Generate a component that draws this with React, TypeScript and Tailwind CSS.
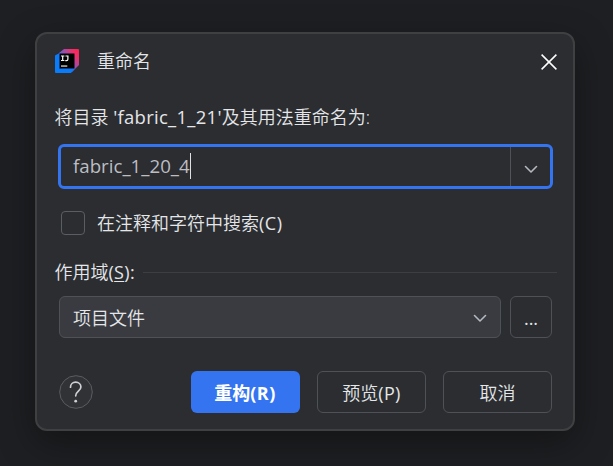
import React from "react";

function Chevron() {
  return (
    <svg width="14" height="9" viewBox="0 0 14 9" fill="none" stroke="#b4b8bf" strokeWidth="1.6" strokeLinecap="round" strokeLinejoin="round">
      <path d="M1.5 1.5 7 7l5.5-5.5" />
    </svg>
  );
}

function Logo() {
  return (
    <svg width="24" height="24" viewBox="0 0 24 24" className="shrink-0">
      <defs>
        <linearGradient id="edge" gradientUnits="userSpaceOnUse" x1="24" y1="2" x2="8" y2="14">
          <stop offset="0" stopColor="#ff2255" />
          <stop offset="0.25" stopColor="#f02f68" />
          <stop offset="0.75" stopColor="#7a59c4" />
          <stop offset="1" stopColor="#4b6ce0" />
        </linearGradient>
      </defs>
      <path d="M9 0h14a1 1 0 0 1 1 1v15l-7 7L4 19V4z" fill="url(#edge)" />
      <path d="M0 6.5 4.5 4v15.5H20L16 24H1a1 1 0 0 1-1-1z" fill="#087cfa" />
      <path d="M4.5 4.5h15v15h-15z" fill="#000" />
      <path d="M6 7h3.4M7.7 7v4.6M6 11.5h3.4M10.5 7h2.4v3.2q0 1.4-1.4 1.4h-1.2" stroke="#fff" strokeWidth="1.2" fill="none" />
      <path d="M6 16.3h6.3v1.5H6z" fill="#bbb" />
    </svg>
  );
}

export default function App() {
  return (
    <div className="h-[466px] w-[613px] overflow-hidden bg-[#1e1f22] pl-[35px] pt-8 font-['Open_Sans','Noto_Sans_CJK_SC',sans-serif] text-[18px] leading-6 text-[#e4e6ea]">
      <div className="h-[399px] w-[540px] rounded-[12px] border-2 border-[#3f4042] bg-[#2b2d30] shadow-[0_12px_36px_rgba(0,0,0,0.35)]">
        <header className="flex h-[54px] items-center pl-[18px] pr-4">
          <Logo />
          <h1 className="ml-[18px] grow font-[350]">重命名</h1>
          <svg width="16" height="16" viewBox="0 0 16 16" stroke="#fff" strokeWidth="1.5" className="mt-px">
            <path d="M.6.6l14.8 14.8M15.4.6L.6 15.4" />
          </svg>
        </header>
        <main className="pl-[18px] pr-4">
          <p className="-ml-[0.5px] mt-[17px] whitespace-nowrap font-[350]">
            将目录 <span className="text-[18.5px] font-normal tracking-[0.28px]">'fabric_1_21'</span>及其用法重命名为:
          </p>
          <div className="ml-[3px] mt-[15px] flex h-[45px] w-[495px] rounded-[6px] border-[3px] border-[#3574f0]">
            <div className="flex grow items-center pb-0.5 pl-3 text-[18.7px] text-[#bcbec4]">
              <span className="whitespace-nowrap">fabric_1_20_4</span>
              <span className="h-[26px] w-px bg-[#dfe1e5]" />
            </div>
            <div className="flex w-10 items-center justify-center border-l border-[#4e5157] pt-[5px]">
              <Chevron />
            </div>
          </div>
          <label className="mt-[22px] flex h-6 items-center">
            <span className="ml-[6px] size-6 rounded-[4px] border border-[#5a5d63]" />
            <span className="ml-3 font-[350]">在注释和字符中搜索<span className="font-normal tracking-[0.5px]">(C)</span></span>
          </label>
          <div className="mt-[25px] flex h-6 items-center">
            <span className="-ml-[0.5px] w-[88.5px] whitespace-nowrap pb-px font-[350]">
              作用域<span className="font-normal tracking-[0.3px]">(<u className="underline-offset-2">S</u>):</span>
            </span>
            <span className="h-px grow bg-[#3c3e42]" />
          </div>
          <div className="ml-1 mt-3 flex gap-[9px]">
            <div className="flex h-[42px] w-[442px] items-center justify-between rounded-[6px] border border-[#4e5157] bg-[#393b40] pl-[13px] pr-[13px] pt-0.5 font-[350]">
              <span>项目文件</span>
              <Chevron />
            </div>
            <button className="h-[42px] w-[42px] rounded-[6px] border border-[#4e5157] pt-0.5">...</button>
          </div>
        </main>
        <footer className="mt-[33px] flex h-[42px] items-center pl-[22px]">
          <svg width="34" height="34" viewBox="0 0 34 34" fill="none">
            <circle cx="17" cy="17" r="16.3" fill="#303236" stroke="#5a5d63" />
            <path d="M11.5 12.2c0-3 2.3-5 5.2-5s5.2 1.9 5.2 4.8c0 4-5.2 4.5-5.2 8.8" stroke="#ced0d6" strokeWidth="1.7" strokeLinecap="round" />
            <circle cx="16.7" cy="26.2" r="1.4" fill="#ced0d6" />
          </svg>
          <button className="ml-[98px] h-[42px] w-[109px] rounded-[6px] bg-[#3574f0] pr-px pt-px font-bold text-white">重构<span className="tracking-[0.5px]">(R)</span></button>
          <button className="ml-[17px] h-[42px] w-[109px] rounded-[6px] border border-[#4e5157] pt-px font-[350]">预览<span className="font-normal tracking-[0.3px]">(P)</span></button>
          <button className="ml-[17px] h-[42px] w-[109px] rounded-[6px] border border-[#4e5157] pt-px font-[350]">取消</button>
        </footer>
      </div>
    </div>
  );
}
